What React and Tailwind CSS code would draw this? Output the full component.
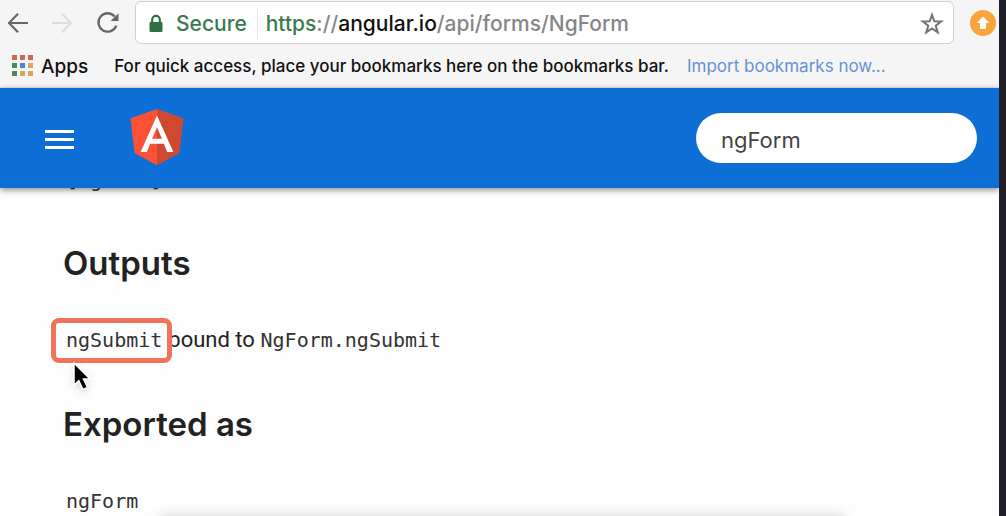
import React from "react";

const dots = [
  "bg-[#cb6a52]", "bg-[#cb6a52]", "bg-[#cb6a52]",
  "bg-[#4f8560]", "bg-[#4a86d8]", "bg-[#dba655]",
  "bg-[#4f8560]", "bg-[#dba655]", "bg-[#dba655]",
];

function BackIcon() {
  return (
    <svg className="h-5 w-5" viewBox="0 0 20 20" fill="none" stroke="currentColor" strokeWidth="2.2">
      <path d="M20 10H1.5M10 0.8 1 10l9 9.2" />
    </svg>
  );
}

function ReloadIcon() {
  return (
    <svg className="h-6 w-6" viewBox="0 0 24 24" fill="none">
      <path d="M18.6 5.4A9.2 9.2 0 1 0 20.3 14.6" stroke="#666" strokeWidth="2.3" />
      <path d="M22.5 2.2V10h-8z" fill="#666" />
    </svg>
  );
}

function AngularLogo() {
  return (
    <svg className="h-14 w-[54px]" viewBox="0 0 54 56">
      <path d="M27 0 .5 9.3l4 34.8L27 56.4z" fill="#fb5236" />
      <path d="m27 0 26.5 9.3-4 34.8L27 56.4z" fill="#cf4930" />
      <path fillRule="evenodd" d="M27 6.500 10.600 43h6.200l3.300-8.200h13.800l3.300 8.200h6.200zm0 11.800 4.900 11.500h-9.800z" fill="#fff" />
    </svg>
  );
}

function Cursor() {
  return (
    <svg className="absolute left-2.5 top-[38px] h-8 w-6 drop-shadow-md" viewBox="0 0 24 32" aria-hidden="true">
      <path d="M1 1v22l4.800-4.300 4.200 8.800 4.500-2-4-8.500H17z" fill="#000" stroke="#fff" strokeWidth="1.500" />
    </svg>
  );
}

const mono = "font-['DejaVu_Sans_Mono',monospace] text-[#333]";
const heading = "text-[33px] font-semibold leading-10";

export default function App() {
  return (
    <div className="flex h-screen overflow-hidden bg-[#1f1f29] pr-[7px] font-[Inter,sans-serif]">
      <div className="relative flex min-w-0 flex-1 flex-col overflow-hidden bg-[#fdfdfd]">
        <div className="relative z-10 shrink-0 bg-[#f5f5f5]">
          <div className="flex items-center pr-[3px] pt-px">
            <div className="flex shrink-0 items-center gap-6 pl-2 pr-[15px]">
              <button aria-label="Back" className="text-[#666]"><BackIcon /></button>
              <button aria-label="Forward" disabled className="-scale-x-100 text-[#dcdcdc]"><BackIcon /></button>
              <button aria-label="Reload"><ReloadIcon /></button>
            </div>
            <div className="flex h-[43px] min-w-0 flex-1 items-center rounded-md border border-[#cfcfcf] bg-white px-3 pt-0.5 text-[21px] font-medium">
              <svg className="mr-3 h-5 w-4 shrink-0" viewBox="0 0 16 20">
                <path d="M4.2 9V5.6a3.8 3.8 0 0 1 7.6 0V9" fill="none" stroke="#2f7147" strokeWidth="2.2" />
                <rect x="1.500" y="8" width="13" height="10" rx="1" fill="#2f7147" />
              </svg>
              <span className="text-[#3b7a50]">Secure</span>
              <span className="ml-2.5 mr-2 h-8 w-px bg-[#e4e4e4]" />
              <span className="min-w-0 flex-1 truncate text-[#868686]">
                <span className="text-[#3b7a50]">https</span>://<span className="text-[#111]">angular.io</span>/api/forms/NgForm
              </span>
              <button aria-label="Bookmark this page" className="-mr-1 p-px">
                <svg className="h-6 w-6" viewBox="0 0 24 24" fill="none" stroke="#737373" strokeWidth="2">
                  <path d="m12 2.800 2.300 6.500 6.900.2-5.500 4.200 2 6.700-5.700-4-5.700 4 2-6.700-5.500-4.200 6.900-.2z" />
                </svg>
              </button>
            </div>
            <button aria-label="Update" className="ml-4 flex h-[26px] w-[26px] items-center justify-center rounded-full bg-[#f9a53a]">
              <svg className="h-4 w-4" viewBox="0 0 16 16"><path d="m8 1.500 6.200 6.600H11V14H5V8.100H1.800z" fill="#fff" /></svg>
            </button>
          </div>
          <div className="flex h-11 items-center whitespace-nowrap border-b border-[#dfe6f0] pl-3 pt-[3px] text-[17px] text-[#111]">
            <a href="#apps" className="flex items-center gap-2 text-[19px] font-medium">
              <span className="-mt-1 grid grid-cols-3 gap-[3px]">
                {dots.map((c, i) => <span key={i} className={`h-[5px] w-[5px] ${c}`} />)}
              </span>
              Apps
            </a>
            <span className="ml-[26px] font-medium">For quick access, place your bookmarks here on the bookmarks bar.</span>
            <a href="#import" className="ml-[18px] text-[#6592d0]">Import bookmarks now...</a>
          </div>
        </div>

        <header className="relative z-10 flex h-[100px] shrink-0 items-center bg-[#0d6fd6] pl-[45px] pr-[22px] shadow-[0_2px_6px_rgba(0,0,0,0.45)]">
          <button aria-label="Menu" className="mt-0.5 flex w-[29px] flex-col gap-[5px]">
            <span className="h-[3px] bg-white" />
            <span className="h-[3px] bg-white" />
            <span className="h-[3px] bg-white" />
          </button>
          <a href="#home" aria-label="Angular" className="-mt-0.5 ml-14"><AngularLogo /></a>
          <input
            aria-label="Search"
            defaultValue="ngForm"
            className="ml-auto h-[50px] w-[281px] rounded-full bg-white px-[25px] pt-1 text-[22px] text-[#444] outline-none"
          />
        </header>

        <main className="-mt-5 px-[63px] text-[#222]">
          <p className={`px-[3px] text-[20px] leading-6 ${mono}`}>[ngForm]</p>
          <h2 className={`mt-[51px] ${heading}`}>Outputs</h2>
          <p className="relative mt-[41px] px-[3px] text-[20px] leading-8">
            <code className={mono}>ngSubmit</code>
            <span className="ml-1.5 font-[Roboto,sans-serif] text-[22px]">bound to</span>{" "}
            <code className={mono}>NgForm.ngSubmit</code>
            <span className="absolute -left-3 -top-1.5 h-[45px] w-[121px] rounded-lg border-[5px] border-[#f0745c]" />
            <Cursor />
          </p>
          <h2 className={`mt-12 ${heading}`}>Exported as</h2>
          <p className={`mt-[41px] px-[3px] text-[20px] leading-8 ${mono}`}>ngForm</p>
        </main>
        <div className="absolute -bottom-5 left-[160px] right-[155px] h-5 shadow-[0_0_12px_rgba(0,0,0,0.18)]" />
      </div>
    </div>
  );
}
